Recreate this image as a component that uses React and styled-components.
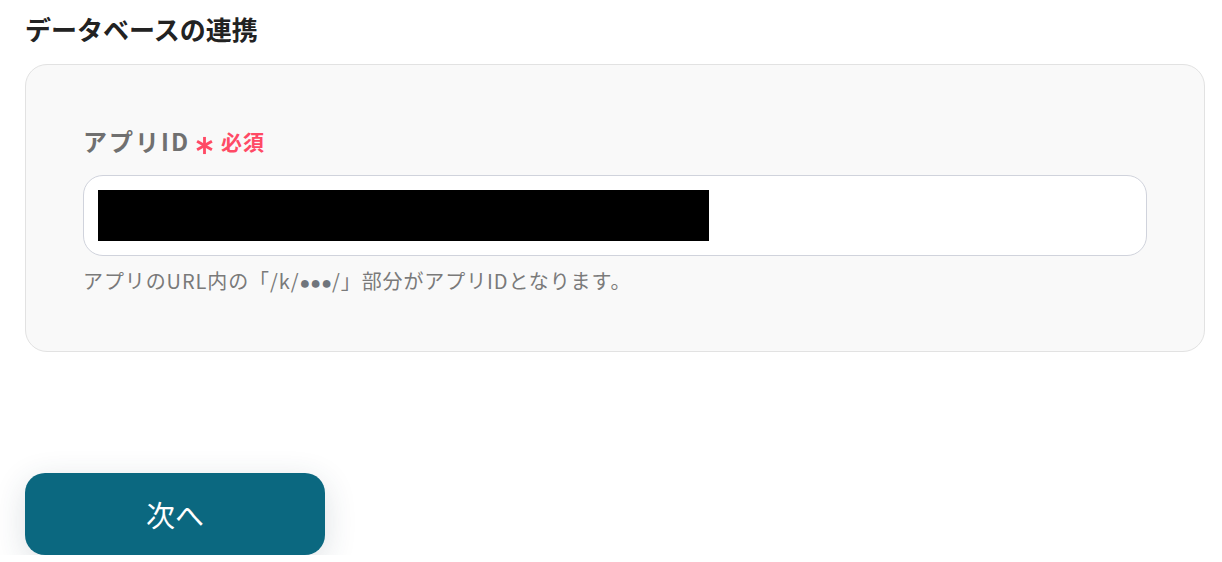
import React from 'react'
import styled, { createGlobalStyle } from 'styled-components'

const GlobalStyle = createGlobalStyle`
  body {
    margin: 0;
    background: #ffffff;
    font-family: "Noto Sans CJK JP", "Noto Sans", sans-serif;
  }
`

const Page = styled.div`
  padding: 9px 17px 0 25px;
`

const Title = styled.h2`
  margin: 0 0 16px;
  font-size: 26px;
  line-height: 39px;
  font-weight: 700;
  color: #222222;
`

const Card = styled.section`
  background: #f9f9f9;
  border: 1px solid #e2e2e2;
  border-radius: 22px;
  padding: 58px 57px 57px;
`

const Label = styled.div`
  display: flex;
  align-items: center;
  gap: 5px;
  margin-bottom: 16px;
  font-size: 24px;
  line-height: 36px;
  font-weight: 700;
  letter-spacing: 2px;
  color: #707070;
`

const Required = styled.span`
  display: flex;
  align-items: center;
  gap: 7px;
  color: #ff4a65;
  font-size: 21px;
  letter-spacing: 1px;
`

const AsteriskIcon = styled.svg`
  width: 19px;
  height: 19px;
  margin-top: 8px;
`

const InputBox = styled.div`
  background: #ffffff;
  border: 1px solid #d0d3dc;
  border-radius: 20px;
  padding: 14px;
  height: 51px;
`

const Redacted = styled.div`
  width: 611px;
  height: 51px;
  background: #000000;
`

const Hint = styled.p`
  margin: 11px 0 0;
  font-size: 20px;
  line-height: 27px;
  letter-spacing: 0.9px;
  color: #7a7a7a;
`

const Dots = styled.span`
  font-family: "Liberation Sans", sans-serif;
  font-size: 18px;
  line-height: 0;
  letter-spacing: 0;
  color: #70757c;
`

const NextButton = styled.button`
  margin-top: 121px;
  width: 300px;
  height: 82px;
  border: none;
  border-radius: 20px;
  background: #0b6880;
  color: #ffffff;
  font-family: inherit;
  font-size: 29px;
  box-shadow: 0 8px 32px rgba(40, 60, 80, 0.16);
  cursor: pointer;
`

const Asterisk = () => (
  <AsteriskIcon viewBox="0 0 20 20" aria-hidden="true">
    <g stroke="#ff4a65" strokeWidth="3" strokeLinecap="butt">
      <line x1="10" y1="1" x2="10" y2="19" />
      <line x1="2.2" y1="5.5" x2="17.8" y2="14.5" />
      <line x1="2.2" y1="14.5" x2="17.8" y2="5.5" />
    </g>
  </AsteriskIcon>
)

export default function App() {
  return (
    <>
      <GlobalStyle />
      <Page>
        <Title>データベースの連携</Title>
        <Card>
          <Label>
            アプリID
            <Required>
              <Asterisk />
              必須
            </Required>
          </Label>
          <InputBox>
            <Redacted />
          </InputBox>
          <Hint>
            アプリのURL内の「/k/<Dots>●●●</Dots>/」部分がアプリIDとなります。
          </Hint>
        </Card>
        <NextButton type="button">次へ</NextButton>
      </Page>
    </>
  )
}
